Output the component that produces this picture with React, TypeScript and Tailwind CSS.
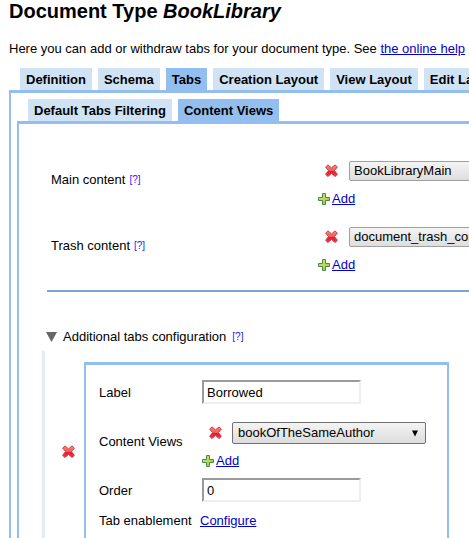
import { useId, useState } from "react";

function DeleteIcon() {
  return (
    <svg width="14" height="14" viewBox="0 0 14 14" aria-hidden="true">
      <defs>
        <linearGradient id="deleteFill" x1="0" y1="0" x2="0" y2="1">
          <stop offset="0" stopColor="#f58a80" />
          <stop offset="0.5" stopColor="#ee5a5c" />
          <stop offset="0.55" stopColor="#e8192f" />
          <stop offset="1" stopColor="#f0394a" />
        </linearGradient>
      </defs>
      <path
        d="M3 0.9 L6.5 3.9 L10 0.9 L12.4 3.1 L9.4 6.6 L12.4 10.3 L10.1 12.5 L6.5 9.4 L2.9 12.5 L0.6 10.3 L3.6 6.6 L0.6 3.1 Z"
        fill="url(#deleteFill)"
        stroke="#c93a42"
        strokeWidth="1"
        strokeLinejoin="round"
      />
    </svg>
  );
}

function AddIcon() {
  return (
    <svg width="12" height="12" viewBox="0 0 12 12" aria-hidden="true">
      <defs>
        <linearGradient id="addFill" x1="0" y1="0" x2="1" y2="1">
          <stop offset="0" stopColor="#c2de7c" />
          <stop offset="0.5" stopColor="#c3d94f" />
          <stop offset="1" stopColor="#7db83a" />
        </linearGradient>
      </defs>
      <path
        d="M4.5 0.5 H7.5 V4.5 H11.5 V7.5 H7.5 V11.5 H4.5 V7.5 H0.5 V4.5 H4.5 Z"
        fill="url(#addFill)"
        stroke="#458a55"
        strokeWidth="1"
        strokeLinejoin="round"
      />
    </svg>
  );
}

function DeleteButton({ label }: { label: string }) {
  return (
    <button type="button" aria-label={label} className="block shrink-0">
      <DeleteIcon />
    </button>
  );
}

function AddLink() {
  return (
    <a href="#add" className="flex w-fit items-center gap-0.5 leading-4 text-[#0000cc]">
      <AddIcon />
      <span className="underline">Add</span>
    </a>
  );
}

function Help() {
  return (
    <a href="#help" className="text-[10px] text-[#2222ff]">
      [?]
    </a>
  );
}

function Tab({ label, active }: { label: string; active?: boolean }) {
  return (
    <a
      href="#tab"
      className={
        "h-[22px] shrink-0 px-1.5 font-bold leading-6 whitespace-nowrap " +
        (active ? "bg-[#92bfef]" : "bg-[#d0e3f5]")
      }
    >
      {label}
    </a>
  );
}

function ContentViewRow({ label, value }: { label: string; value: string }) {
  const id = useId();
  return (
    <div className="flex h-[66px] items-center">
      <div className="flex w-[267px] shrink-0 items-center gap-1 pb-2">
        <label htmlFor={id}>{label}</label>
        <Help />
      </div>
      <div className="flex shrink-0 flex-col gap-2.5">
        <div className="flex items-center gap-2.5 pl-[7px]">
          <DeleteButton label={"Remove " + value} />
          <select
            id={id}
            className="h-5 w-60 appearance-none rounded-xs border border-[#a0a0a0] bg-linear-to-b from-[#f4f4f4] to-[#dedede] px-1 leading-[18px]"
          >
            <option>{value}</option>
          </select>
        </div>
        <AddLink />
      </div>
    </div>
  );
}

function TextField({ label, initial }: { label: string; initial: string }) {
  const id = useId();
  const [value, setValue] = useState(initial);
  return (
    <div className="flex h-6 items-center">
      <label htmlFor={id} className="w-[103px] shrink-0 pt-0.5">
        {label}
      </label>
      <input
        id={id}
        type="text"
        value={value}
        onChange={(e) => setValue(e.target.value)}
        className="h-6 w-[159px] border-2 border-t-[#9a9a9a] border-r-[#eeeeee] border-b-[#eeeeee] border-l-[#9a9a9a] bg-white px-[3px]"
      />
    </div>
  );
}

function TabCard() {
  const id = useId();
  return (
    <div className="flex w-[365px] flex-col border-2 border-t-3 border-[#92bfef] px-[13px] pt-[15px] pb-0.5">
      <TextField label="Label" initial="Borrowed" />
      <div className="flex h-[74px] items-center">
        <label htmlFor={id} className="w-[103px] shrink-0 pt-0.5">
          Content Views
        </label>
        <div className="flex flex-col gap-[9px] pt-[9px]">
          <div className="flex items-center gap-[9px] pl-[7px]">
            <DeleteButton label="Remove content view" />
            <div className="grid items-center">
              <select
                id={id}
                className="col-start-1 row-start-1 h-[22px] w-[194px] appearance-none rounded-xs border border-[#707070] bg-linear-to-b from-[#f4f4f4] to-[#dcdcdc] px-[5px] leading-5"
              >
                <option>bookOfTheSameAuthor</option>
              </select>
              <svg
                width="6"
                height="7"
                viewBox="0 0 6 7"
                aria-hidden="true"
                className="pointer-events-none col-start-1 row-start-1 mr-2 justify-self-end"
              >
                <path d="M0 0.5 H6 L3 6.5 Z" fill="#000" />
              </svg>
            </div>
          </div>
          <AddLink />
        </div>
      </div>
      <TextField label="Order" initial="0" />
      <div className="flex h-9 items-center pt-0.5">
        <span className="w-[101px]">Tab enablement</span>
        <a href="#configure" className="text-[#0000cc] underline">
          Configure
        </a>
      </div>
    </div>
  );
}

export default function App() {
  return (
    <div className="flex h-screen flex-col overflow-hidden bg-white pl-[9px] font-['Liberation_Sans',Arial,sans-serif] text-[13px] leading-5 text-black">
      <h1 className="text-[20px] leading-[22px] font-bold whitespace-nowrap">
        Document Type <em>BookLibrary</em>
      </h1>
      <p className="pt-[17px] pb-[9px] whitespace-nowrap">
        Here you can add or withdraw tabs for your document type. See{" "}
        <a href="#help" className="text-[#0000cc] underline">
          the online help
        </a>
      </p>
      <nav className="flex shrink-0 gap-1.5 pl-[11px]">
        <Tab label="Definition" />
        <Tab label="Schema" />
        <Tab label="Tabs" active />
        <Tab label="Creation Layout" />
        <Tab label="View Layout" />
        <Tab label="Edit Layout" />
      </nav>
      <div className="flex-1 border-t-3 border-l-2 border-[#92bfef] pt-1.5 pl-1.5">
        <nav className="flex gap-1.5 pl-[11px]">
          <Tab label="Default Tabs Filtering" />
          <Tab label="Content Views" active />
        </nav>
        <div className="border-t-3 border-l-2 border-[#92bfef] pt-[27px] pb-5 pl-[23px]">
          <div className="ml-[5px] border-b-2 border-[#7ba5da] pb-[7px] pl-1">
            <ContentViewRow label="Main content" value="BookLibraryMain" />
            <ContentViewRow label="Trash content" value="document_trash_content" />
          </div>
          <div className="mt-[35px] flex items-center gap-1.5 pl-1">
            <svg width="11" height="10" viewBox="0 0 11 10" aria-hidden="true">
              <path d="M0 0 H11 L5.5 10 Z" fill="#666" />
            </svg>
            <span>Additional tabs configuration</span>
            <Help />
          </div>
          <div className="mt-1 flex items-center border-l-3 border-[#e4ecf7] pt-[11px] pl-[17px]">
            <div className="w-[22px] shrink-0">
              <DeleteButton label="Remove tab" />
            </div>
            <TabCard />
          </div>
        </div>
      </div>
    </div>
  );
}
